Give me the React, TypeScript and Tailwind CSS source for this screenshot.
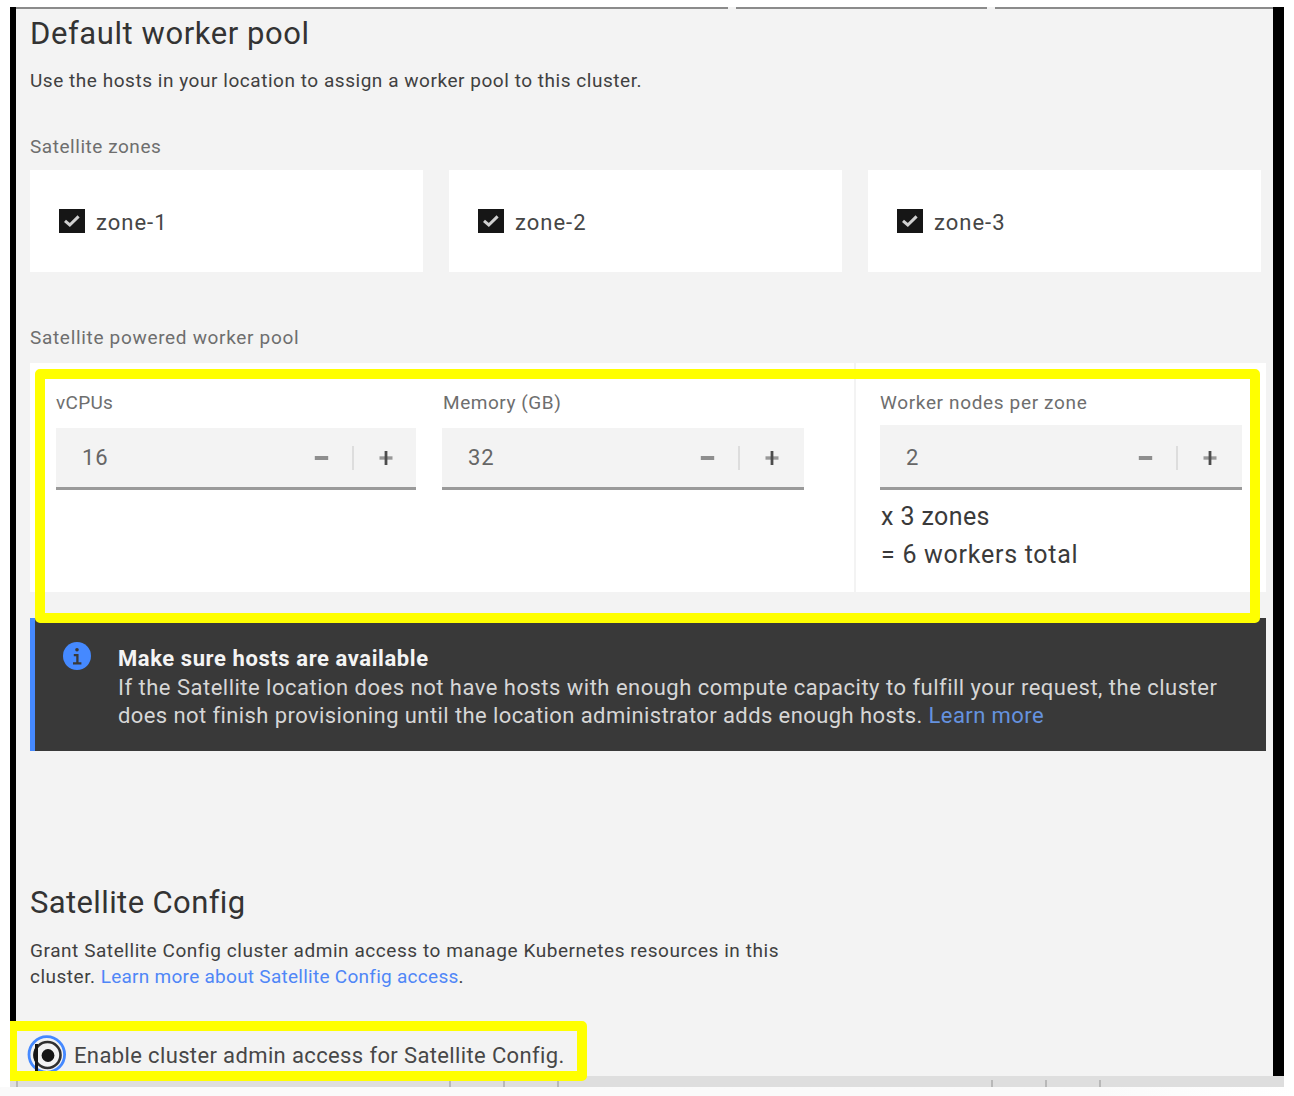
import type { ReactNode } from "react";

function Zone({ name }: { name: string }) {
  return (
    <label className="flex h-[102px] items-center bg-white pl-[29px]">
      <span className="-mt-px flex h-6 w-[26px] items-center justify-center bg-[#161616]">
        <svg width="18" height="14" viewBox="0 0 18 14" fill="none" stroke="#d0d0d0" strokeWidth="3">
          <path d="M2 6.8 6.8 11 15.6 2.4" />
        </svg>
      </span>
      <span className="ml-[11px] pt-[2px] text-[22px] tracking-[1px] text-[#464646]">{name}</span>
    </label>
  );
}

function Stepper({ value, className }: { value: string; className: string }) {
  return (
    <div className={`flex items-center border-b-[3px] border-[#9a9a9a] bg-[#f3f3f3] pl-[26px] text-[22px] tracking-[1px] text-[#666666] ${className}`}>
      <span className="w-[232px] pt-px leading-6">{value}</span>
      <svg width="15" height="16" viewBox="0 0 15 16" className="shrink-0">
        <path d="M.8 8h13.4" stroke="#8e8e8e" strokeWidth="4" />
      </svg>
      <span className="ml-[23px] h-6 w-[2px] bg-[#dddddd]" />
      <svg width="16" height="16" viewBox="0 0 16 16" className="ml-[24px] shrink-0">
        <path d="M1.5 8h13" stroke="#989898" strokeWidth="3.4" />
        <path d="M8 1v14" stroke="#4c4c4c" strokeWidth="2.8" />
      </svg>
    </div>
  );
}

function Label({ children, className }: { children: ReactNode; className: string }) {
  return <div className={`text-[19px] leading-6 whitespace-nowrap text-[#6e6e6e] ${className}`}>{children}</div>;
}

export default function App() {
  return (
    <div className="h-[1096px] w-[1294px] overflow-hidden bg-white pt-[7px] font-['Roboto',sans-serif]">
      <div className="relative ml-[10px] w-[1274px]">
        <div className="h-[1069px] border-r-[11px] border-l-[6px] border-black bg-[#f3f3f3]">
          <div className="flex h-[2px] gap-2">
            <div className="w-[712px] bg-[#8b8b8b]" />
            <div className="w-[251px] bg-[#8b8b8b]" />
            <div className="flex-1 bg-[#8b8b8b]" />
          </div>

          <div className="pl-[14px]">
            <h1 className="pt-[5px] text-[31px] leading-10 tracking-[0.58px] text-[#333333]">Default worker pool</h1>
            <p className="mt-[15px] text-[19px] leading-6 tracking-[0.54px] text-[#404040]">
              Use the hosts in your location to assign a worker pool to this cluster.
            </p>

            <Label className="mt-[42px] tracking-[0.54px]">Satellite zones</Label>
            <div className="mt-[11px] grid w-[1231px] grid-cols-3 gap-[26px]">
              <Zone name="zone-1" />
              <Zone name="zone-2" />
              <Zone name="zone-3" />
            </div>

            <Label className="mt-[54px] tracking-[0.68px]">Satellite powered worker pool</Label>
            <div className="mt-[13px] flex h-[229px] w-[1236px] bg-white">
              <div className="flex w-[826px] gap-[26px] border-r-2 border-[#f3f3f3] pt-[28px] pl-[26px]">
                <div className="w-[360px]">
                  <Label className="tracking-[0.3px]">vCPUs</Label>
                  <Stepper value="16" className="mt-[13px] h-[62px]" />
                </div>
                <div className="w-[362px]">
                  <Label className="pl-px tracking-[0.55px]">Memory (GB)</Label>
                  <Stepper value="32" className="mt-[13px] h-[62px]" />
                </div>
              </div>
              <div className="ml-[24px] w-[362px] pt-[28px]">
                <Label className="tracking-[0.65px]">Worker nodes per zone</Label>
                <Stepper value="2" className="mt-[10px] h-[65px] pt-[3px]" />
                <p className="mt-[8px] pl-px text-[25px] leading-[38px] tracking-[0.4px] text-[#3a3a3a]">x 3 zones</p>
                <p className="pl-px text-[25px] leading-[38px] tracking-[0.73px] text-[#3a3a3a]">= 6 workers total</p>
              </div>
            </div>

            <div className="mt-[26px] flex h-[133px] w-[1236px] border-l-[5px] border-[#4589ff] bg-[#393939]">
              <svg width="28" height="28" viewBox="0 0 28 28" className="mt-[24px] ml-[28px] shrink-0">
                <circle cx="14" cy="14" r="14" fill="#4589ff" />
                <path d="M10 21.4h8.4M10.8 13.2h3.6v8" fill="none" stroke="#393939" strokeWidth="2.3" />
                <circle cx="14" cy="7.8" r="1.8" fill="#393939" />
              </svg>
              <div className="ml-[27px] pt-[27px] text-[22px] leading-[28.5px] whitespace-nowrap text-[#d6d6d6]">
                <p className="font-bold tracking-[0.58px] text-[#f4f4f4]">Make sure hosts are available</p>
                <p className="tracking-[0.49px]">
                  If the Satellite location does not have hosts with enough compute capacity to fulfill your request, the cluster
                </p>
                <p className="tracking-[0.41px]">
                  does not finish provisioning until the location administrator adds enough hosts.{" "}
                  <a className="text-[#6592df]">Learn more</a>
                </p>
              </div>
            </div>

            <h2 className="mt-[132px] text-[31px] leading-10 tracking-[0.38px] text-[#333333]">Satellite Config</h2>
            <p className="mt-[15px] text-[19px] leading-[26px] tracking-[0.56px] text-[#404040]">
              Grant Satellite Config cluster admin access to manage Kubernetes resources in this
              <br />
              <span className="tracking-[0.5px]">cluster. </span>
              <span className="tracking-[0.27px]">
                <a className="text-[#4f86f7]">Learn more about Satellite Config access</a>.
              </span>
            </p>

            <label className="mt-[45px] flex h-10 items-center">
              <svg width="44" height="40" viewBox="0 0 44 40" className="-ml-[5px] shrink-0">
                <circle cx="21.8" cy="19.5" r="17.8" fill="none" stroke="#4589ff" strokeWidth="2.8" />
                <circle cx="22.5" cy="20" r="13" fill="none" stroke="#303030" strokeWidth="2.6" />
                <path d="M11.5 9v31M11.5 13.5q-3.2 6.5 0 13" fill="none" stroke="#161616" strokeWidth="3" />
                <circle cx="23" cy="20.5" r="6.4" fill="#161616" />
              </svg>
              <span className="ml-[5px] pt-[1px] text-[22px] tracking-[0.37px] text-[#474747]">
                Enable cluster admin access for Satellite Config.
              </span>
            </label>
          </div>
        </div>

        <div className="flex h-[11px] items-end bg-[#dedede] pl-[6px]">
          <div className="h-[7px] w-[2px] bg-[#b8b8b8]" />
          <div className="ml-[431px] h-[7px] w-[2px] bg-[#b8b8b8]" />
          <div className="ml-[52px] h-[7px] w-[2px] bg-[#b8b8b8]" />
          <div className="ml-[52px] h-[7px] w-[2px] bg-[#b8b8b8]" />
          <div className="ml-[432px] h-[7px] w-[2px] bg-[#b8b8b8]" />
          <div className="ml-[52px] h-[7px] w-[2px] bg-[#b8b8b8]" />
          <div className="ml-[52px] h-[7px] w-[2px] bg-[#b8b8b8]" />
        </div>

        {/* highlight frames over the form */}
        <div className="pointer-events-none absolute top-[361.5px] left-[24.5px] h-[254px] w-[1225px] rounded-[5px] border-[10px] border-[#ffff00]" />
        <div className="pointer-events-none absolute top-[1014px] left-0 h-[60px] w-[577px] rounded-r-[5px] border-[10px] border-l-[7px] border-[#ffff00]" />
      </div>
      <div className="h-[9px] bg-gradient-to-r from-[#fafafa] from-85% to-white" />
    </div>
  );
}
